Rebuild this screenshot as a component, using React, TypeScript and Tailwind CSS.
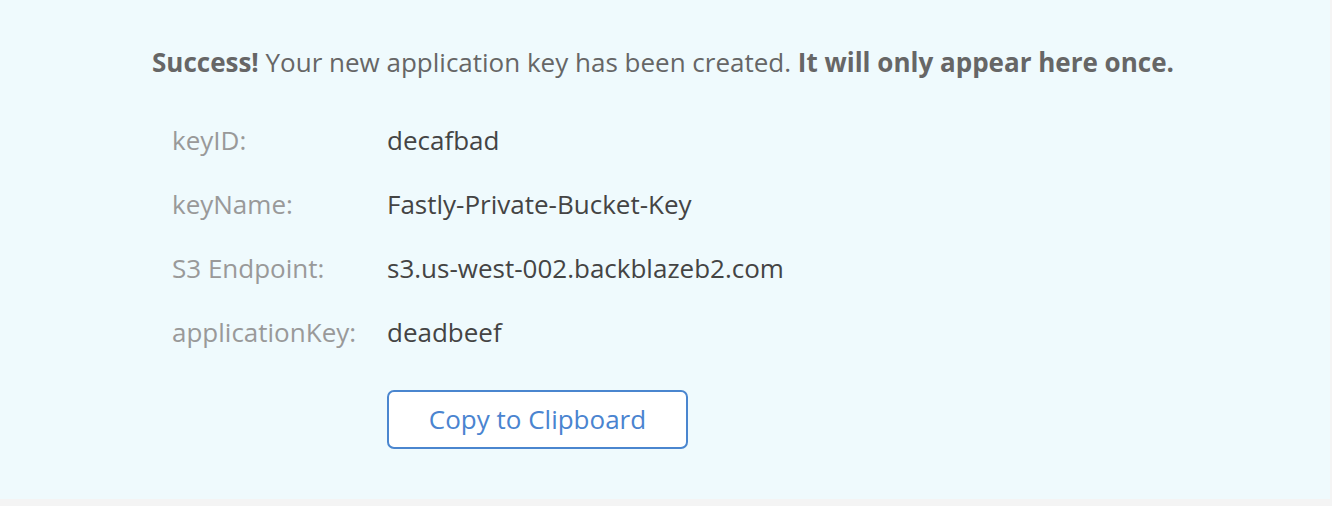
import React from 'react';

const rows = [
  { label: 'keyID:', value: 'decafbad' },
  { label: 'keyName:', value: 'Fastly-Private-Bucket-Key' },
  { label: 'S3 Endpoint:', value: 's3.us-west-002.backblazeb2.com' },
  { label: 'applicationKey:', value: 'deadbeef' },
];

export default function App() {
  return (
    <div
      className="w-[1332px] h-[506px] flex flex-col bg-[#f4f4f4]"
      style={{ fontFamily: '"Open Sans", sans-serif' }}
    >
      <div className="h-[499px] w-[1330px] bg-[#effafd] pt-[44px] pl-[152px]">
        {/* Notice */}
        <p className="text-[26px] leading-[36px] text-[#666]">
          <span className="font-bold">Success!</span> Your new application key has been created.{' '}
          <span className="font-bold">It will only appear here once.</span>
        </p>

        {/* Key details */}
        <div className="mt-[42px] pl-[20px] flex flex-col gap-[28px]">
          {rows.map((row) => (
            <div key={row.label} className="flex items-center text-[26px] leading-[36px]">
              <span className="w-[215px] text-[#999]">{row.label}</span>
              <span className="text-[#444]">{row.value}</span>
            </div>
          ))}
        </div>

        <div className="pl-[235px] mt-[40px]">
          <button className="w-[301px] h-[59px] bg-white border-2 border-[#4a86cf] rounded-[7px] text-[26px] text-[#4a84d0]">
            Copy to Clipboard
          </button>
        </div>
      </div>
    </div>
  );
}
